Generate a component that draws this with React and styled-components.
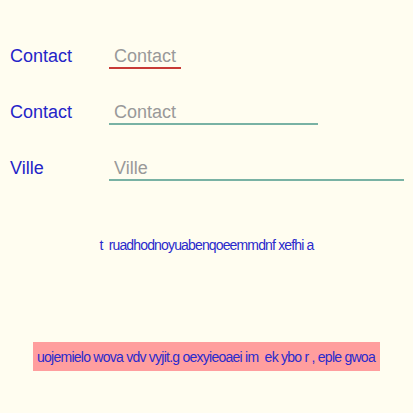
import React from "react";
import styled, { createGlobalStyle } from "styled-components";

const Global = createGlobalStyle`
  html, body { margin: 0; padding: 0; background: #fffdf0; }
  body { font-family: "Liberation Sans", Arial, sans-serif; }
`;

const Page = styled.div`
  width: 413px;
  height: 413px;
  box-sizing: border-box;
  padding-top: 46px;
  display: flex;
  flex-direction: column;
  background: #fffdf0;
`;

const Form = styled.div`
  display: flex;
  flex-direction: column;
  gap: 33px;
  padding-left: 10px;
`;

const Row = styled.div`
  display: flex;
  align-items: baseline;
  height: 23px;
`;

const Label = styled.label`
  width: 99px;
  font-size: 18px;
  line-height: 21px;
  color: #2424c8;
`;

const Input = styled.input`
  width: ${(p) => p.$w}px;
  box-sizing: border-box;
  height: 23px;
  margin: 0;
  padding: 0 0 0 5px;
  border: none;
  border-bottom: 2px solid ${(p) => (p.$error ? "#c83a36" : "#79b2a4")};
  background: transparent;
  font-family: "Liberation Sans", Arial, sans-serif;
  font-size: 18px;
  line-height: 21px;
  color: #333;
  outline: none;
  &::placeholder { color: #999; }
`;

const Message = styled.p`
  margin: 56px 0 0;
  text-align: center;
  font-size: 14px;
  line-height: 16px;
  letter-spacing: -0.85px;
  white-space: pre;
  color: #2a2acc;
`;

const Banner = styled.div`
  align-self: flex-start;
  margin: 89px 0 0 33px;
  width: 347px;
  height: 29px;
  box-sizing: border-box;
  padding: 0 4px;
  display: flex;
  align-items: center;
  background: #ff9e9e;
  color: #2a2acc;
  font-size: 14px;
  letter-spacing: -0.75px;
  white-space: pre;
  overflow: hidden;
`;

export default function App() {
  return (
    <>
      <Global />
      <Page>
        <Form>
          <Row>
            <Label>Contact</Label>
            <Input $w={72} $error placeholder="Contact" />
          </Row>
          <Row>
            <Label>Contact</Label>
            <Input $w={209} placeholder="Contact" />
          </Row>
          <Row>
            <Label>Ville</Label>
            <Input $w={295} placeholder="Ville" />
          </Row>
        </Form>
        <Message>t  ruadhodnoyuabenqoeemmdnf xefhi a</Message>
        <Banner>uojemielo wova vdv vyjit.g oexyieoaei im  ek ybo r , eple gwoa</Banner>
      </Page>
    </>
  );
}
